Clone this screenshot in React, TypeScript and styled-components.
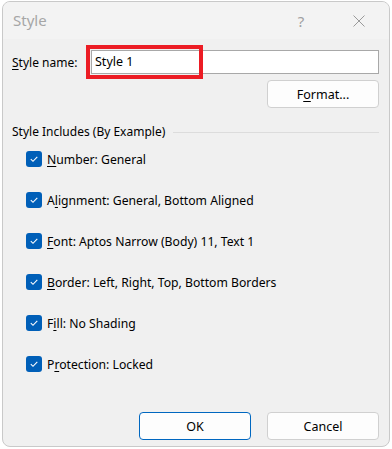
import styled, { createGlobalStyle } from "styled-components";

const GlobalStyle = createGlobalStyle`
  html, body {
    margin: 0;
    padding: 0;
    background: #ffffff;
  }
  body {
    font-family: "Noto Sans", "Open Sans", sans-serif;
    font-size: 12px;
    color: #000;
  }
`;

const Window = styled.div`
  margin: 1px 0 0 2px;
  width: 388px;
  height: 446px;
  border: 1px solid #c9c9c9;
  border-radius: 8px;
  background: #f0f0f0;
  display: flex;
  flex-direction: column;
  overflow: hidden;
  box-sizing: border-box;
`;

const TitleBar = styled.div`
  height: 37px;
  display: flex;
  align-items: center;
  padding-left: 10px;
  background: #f3f3f3;
  flex-shrink: 0;
`;

const Title = styled.div`
  flex: 1;
  font-size: 15px;
  color: #a6a6a6;
  padding-bottom: 1px;
`;

const TitleButton = styled.div<{ $gap: number }>`
  width: 46px;
  height: 37px;
  margin-right: ${(p) => p.$gap}px;
  display: flex;
  align-items: center;
  justify-content: center;
  color: #a0a0a0;
  font-size: 15px;
`;

const Body = styled.div`
  flex: 1;
  display: flex;
  flex-direction: column;
  padding: 8px 10px 0 9px;
`;

const NameRow = styled.div`
  display: flex;
  align-items: center;
  height: 24px;
  margin-top: 3px;
`;

const Label = styled.label`
  width: 79px;
`;

const InputWrap = styled.div`
  position: relative;
  flex: 1;
  height: 24px;
`;

const TextInput = styled.div`
  height: 24px;
  box-sizing: border-box;
  border: 1px solid #a8a8a8;
  background: #fff;
  padding: 2px 0 0 3px;
  font-size: 12.5px;
`;

const Highlight = styled.div`
  position: absolute;
  left: -5px;
  top: -5px;
  width: 117px;
  height: 34px;
  box-sizing: border-box;
  border: 4px solid #ec1c24;
`;

const ButtonRow = styled.div<{ $top: number }>`
  display: flex;
  justify-content: flex-end;
  gap: 16px;
  margin-top: ${(p) => p.$top}px;
`;

const Button = styled.div<{ $primary?: boolean }>`
  width: 112px;
  height: 28px;
  box-sizing: border-box;
  border: 1px solid ${(p) => (p.$primary ? "#0067c0" : "#d0d0d0")};
  border-radius: 4px;
  background: #fdfdfd;
  display: flex;
  align-items: center;
  justify-content: center;
  font-size: 12.5px;
`;

const GroupHeader = styled.div`
  display: flex;
  align-items: center;
  gap: 8px;
  margin-top: 15px;

  &::after {
    content: "";
    flex: 1;
    height: 1px;
    background: #dcdcdc;
    margin-top: 1px;
  }
`;

const CheckList = styled.div`
  display: flex;
  flex-direction: column;
  gap: 25px;
  margin-top: 11px;
  padding-left: 14px;
`;

const CheckRow = styled.div`
  display: flex;
  align-items: center;
  gap: 5px;
  height: 16px;
  font-size: 12.2px;
`;

const Box = styled.div`
  width: 16px;
  height: 16px;
  border-radius: 3px;
  background: #005fb8;
  display: flex;
  align-items: center;
  justify-content: center;
`;

const U = styled.span`
  text-decoration: underline;
  text-underline-offset: 2px;
`;

const Spacer = styled.div`
  flex: 1;
`;

const Footer = styled.div`
  padding-bottom: 6px;
`;

const items: [string, string, string][] = [
  ["", "N", "umber: General"],
  ["A", "l", "ignment: General, Bottom Aligned"],
  ["", "F", "ont: Aptos Narrow (Body) 11, Text 1"],
  ["", "B", "order: Left, Right, Top, Bottom Borders"],
  ["F", "i", "ll: No Shading"],
  ["P", "r", "otection: Locked"],
];

const Check = () => (
  <Box>
    <svg width="10" height="10" viewBox="0 0 10 10">
      <path d="M1.8 5.2 L4 7.3 L8.3 2.9" fill="none" stroke="#fff" strokeWidth="1.1" />
    </svg>
  </Box>
);

export default function App() {
  return (
    <>
      <GlobalStyle />
      <Window>
        <TitleBar>
          <Title>Style</Title>
          <TitleButton $gap={12}>?</TitleButton>
          <TitleButton $gap={7}>
            <svg width="12" height="12" viewBox="0 0 12 12">
              <path d="M0.5 0.5 L11.5 11.5 M11.5 0.5 L0.5 11.5" stroke="#9a9a9a" strokeWidth="1" fill="none" />
            </svg>
          </TitleButton>
        </TitleBar>
        <Body>
          <NameRow>
            <Label>
              <U>S</U>tyle name:
            </Label>
            <InputWrap>
              <TextInput>Style 1</TextInput>
              <Highlight />
            </InputWrap>
          </NameRow>
          <ButtonRow $top={6}>
            <Button>
              <span>
                F<U>o</U>rmat...
              </span>
            </Button>
          </ButtonRow>
          <GroupHeader>Style Includes (By Example)</GroupHeader>
          <CheckList>
            {items.map(([pre, key, rest]) => (
              <CheckRow key={rest}>
                <Check />
                <span>
                  {pre}
                  <U>{key}</U>
                  {rest}
                </span>
              </CheckRow>
            ))}
          </CheckList>
          <Spacer />
          <Footer>
            <ButtonRow $top={0}>
              <Button $primary>OK</Button>
              <Button>Cancel</Button>
            </ButtonRow>
          </Footer>
        </Body>
      </Window>
    </>
  );
}
